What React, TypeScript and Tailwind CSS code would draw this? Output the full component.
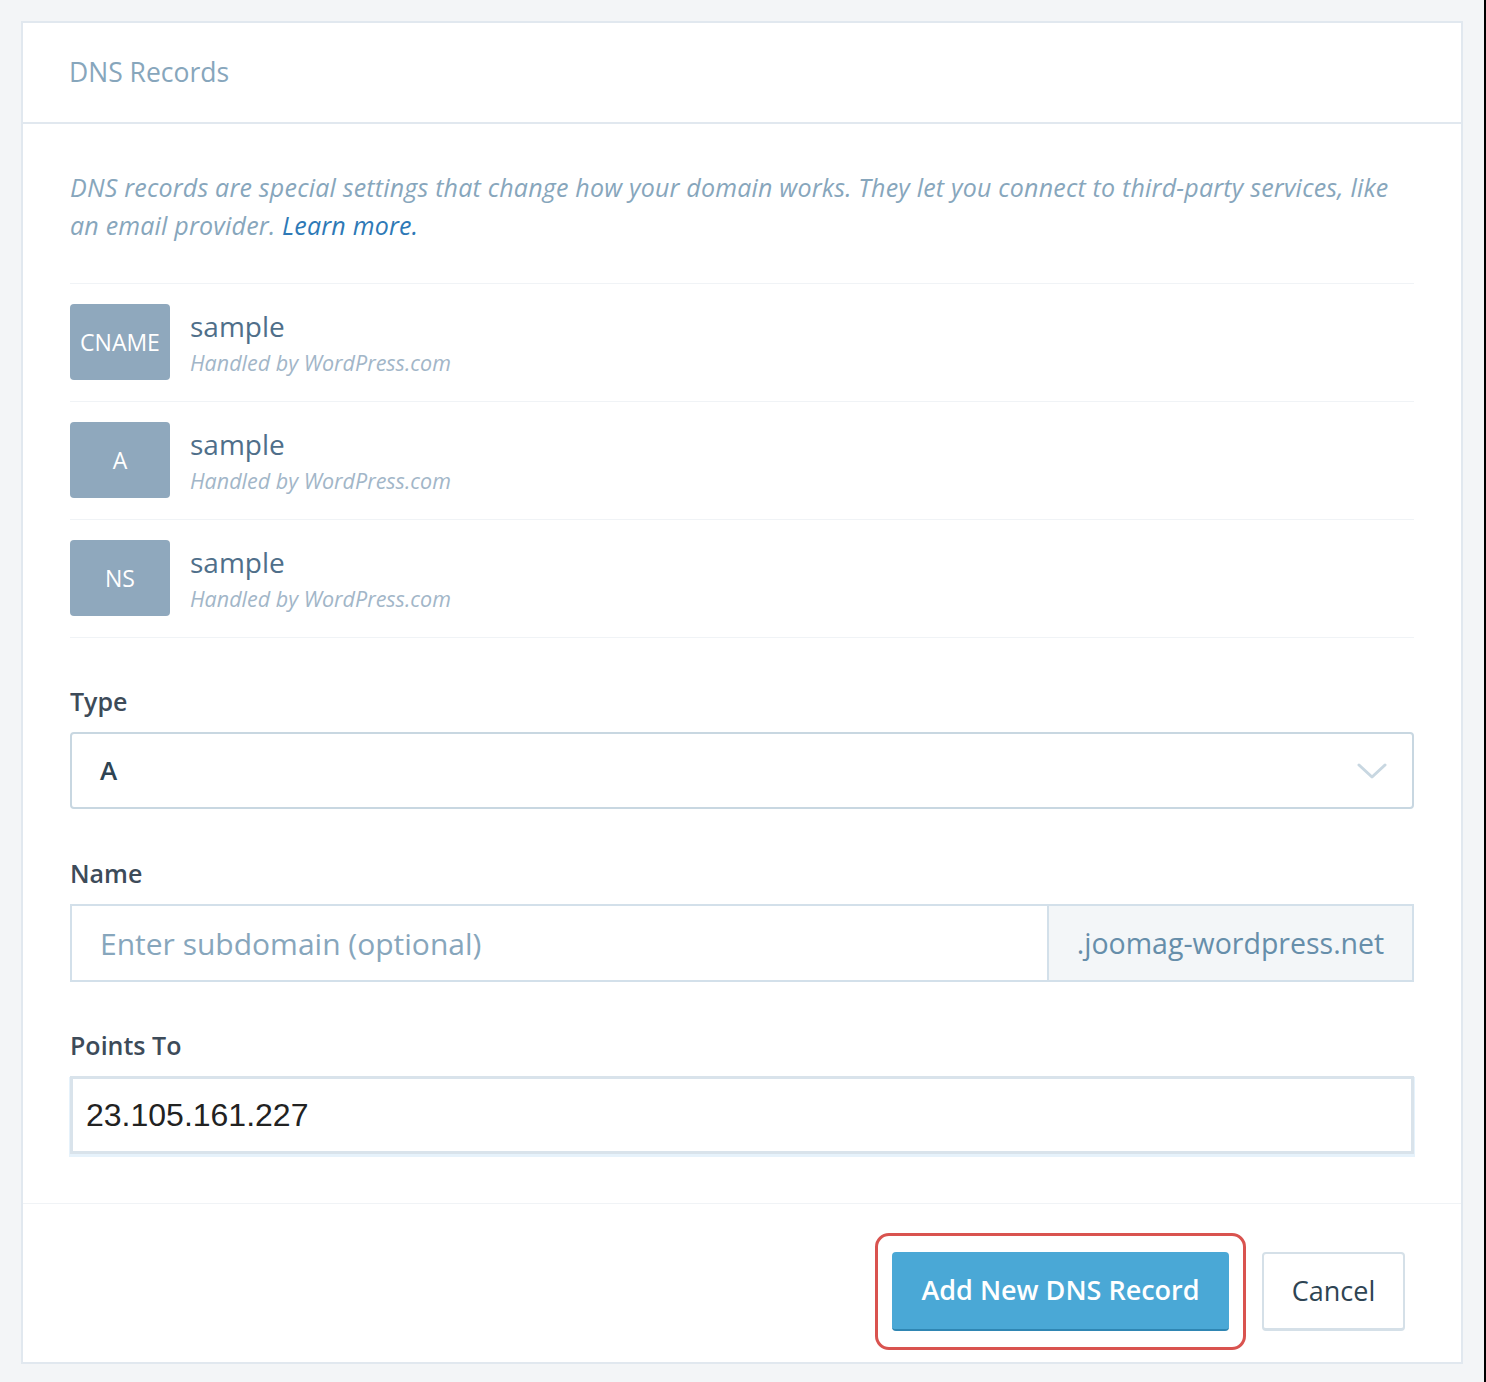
const records = [
  { type: "CNAME", name: "sample" },
  { type: "A", name: "sample" },
  { type: "NS", name: "sample" },
];

export default function App() {
  return (
    <div className="flex h-[1382px] w-[1486px] bg-[#f3f5f7] font-['Open_Sans',sans-serif]">
      <div className="flex-1 pl-[21px] pr-[21px] pt-[21px]">
        <div className="flex h-[1343px] flex-col border-2 border-[#e1e8ef] bg-white">
          {/* Header */}
          <div className="flex h-[101px] items-center border-b-2 border-[#e1e8ef] px-[46px]">
            <h2 className="text-[26.5px] text-[#87a6bc]">DNS Records</h2>
          </div>

          {/* Body */}
          <div className="px-[47px] pt-[44px]">
            <p className="max-w-[1332px] text-[25px] italic leading-[38px] tracking-[0.2px] text-[#87a6bc]">
              DNS records are special settings that change how your domain works. They let you connect to third-party services, like an email provider.{" "}
              <a className="text-[#2e79b6]" href="#">
                Learn more.
              </a>
            </p>

            <ul className="mt-[39px] border-b border-[#f0f3f6]">
              {records.map((r) => (
                <li key={r.type} className="flex items-center gap-[20px] border-t border-[#f0f3f6] pb-[21px] pt-[20px]">
                  <div className="flex h-[76px] w-[100px] items-center justify-center rounded-[4px] bg-[#8fa8bd] text-[23px] text-white">
                    {r.type}
                  </div>
                  <div className="flex flex-col pt-[4px]">
                    <span className="text-[28px] leading-[34px] text-[#4f6f8a]">{r.name}</span>
                    <span className="mt-[4px] text-[21.5px] italic leading-[32px] text-[#a2b6c8]">
                      Handled by WordPress.com
                    </span>
                  </div>
                </li>
              ))}
            </ul>

            <div className="mt-[48px]">
              <label className="block text-[25px] font-semibold leading-[30px] text-[#3d4b59]">Type</label>
              <div className="mt-[16px] flex h-[77px] items-center justify-between rounded-[4px] border-2 border-[#c8d7e1] pl-[28px] pr-[25px]">
                <span className="text-[26px] font-semibold text-[#2e4453]">A</span>
                <svg width="30" height="18" viewBox="0 0 30 18" fill="none">
                  <polyline points="2,3 15,15 28,3" stroke="#c8d7e1" strokeWidth="3" strokeLinecap="round" strokeLinejoin="round" />
                </svg>
              </div>
            </div>

            <div className="mt-[49px]">
              <label className="block text-[25px] font-semibold leading-[30px] text-[#3d4b59]">Name</label>
              <div className="mt-[16px] flex h-[78px] border-2 border-[#d3e0ea]">
                <div className="flex flex-1 items-center pl-[28px] text-[30px] text-[#87a6bc]">
                  Enter subdomain (optional)
                </div>
                <div className="flex w-[365px] items-center justify-center border-l-2 border-[#d3e0ea] bg-[#f3f6f8] text-[28.5px] text-[#668eaa]">
                  .joomag-wordpress.net
                </div>
              </div>
            </div>

            <div className="mt-[48px] pb-[49px]">
              <label className="block text-[25px] font-semibold leading-[30px] text-[#3d4b59]">Points To</label>
              <div className="mt-[16px] flex h-[78px] items-center border-[3px] border-[#d9e3eb] pl-[13px] font-['Liberation_Sans',Arial,sans-serif] text-[32px] text-[#222] shadow-[0_2px_0_1px_#e6f2fb]">
                23.105.161.227
              </div>
            </div>
          </div>

          {/* Footer */}
          <div className="flex flex-1 items-start justify-end gap-[16px] border-t border-[#f0f3f6] pr-[56px] pt-[29px]">
            <div className="rounded-[14px] border-[3px] border-[#d9534f] px-[14px] py-[16px]">
              <button className="h-[79px] w-[337px] rounded-[4px] border-b-2 border-[#2f86b3] bg-[#4aa8d6] text-[27px] font-semibold text-white">
                Add New DNS Record
              </button>
            </div>
            <button className="mt-[19px] h-[79px] w-[143px] rounded-[4px] border-2 border-[#d5e0e8] border-b-[3px] bg-white text-[27px] text-[#2e4453]">
              Cancel
            </button>
          </div>
        </div>
      </div>
      <div className="w-[2px] bg-black" />
    </div>
  );
}
